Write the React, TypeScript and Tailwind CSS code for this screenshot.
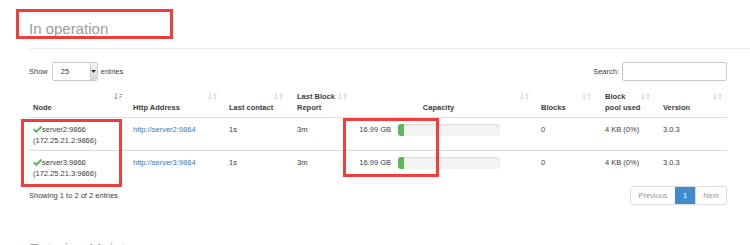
import React from "react";

function SortIcon({ active = false }: { active?: boolean }) {
  const c = active ? "#9a9a9a" : "#cfcfcf";
  return (
    <svg width="9" height="7" viewBox="0 0 9 7" fill="none" stroke={c} strokeWidth="1">
      <path d="M2 0 V6 M0.5 4.5 L2 6 L3.5 4.5" />
      {active ? (
        <path d="M5.5 1.5 H8.5 M5.5 3.5 H7.5 M5.5 5.5 H6.5" />
      ) : (
        <path d="M7 7 V1 M5.5 2.5 L7 1 L8.5 2.5" />
      )}
    </svg>
  );
}

function Check() {
  return (
    <svg width="9" height="7" viewBox="0 0 9 7" fill="none" stroke="#5cb85c" strokeWidth="2" strokeLinecap="square">
      <path d="M1.2 3.8 L3.4 5.8 L7.8 1.2" />
    </svg>
  );
}

const cols = "grid grid-cols-[98px_95px_67px_63px_181px_64px_58px_72px]";

function Th({
  children,
  pl,
  right,
  active,
  center,
}: {
  children: React.ReactNode;
  pl: string;
  right: string;
  active?: boolean;
  center?: boolean;
}) {
  return (
    <div className={`relative flex h-full items-end pb-[4px] ${pl} ${center ? "justify-center pr-[8px]" : ""}`}>
      <div className="font-bold leading-[11px]">{children}</div>
      <div className={`absolute top-[5px] ${right}`}>
        <SortIcon active={active} />
      </div>
    </div>
  );
}

function Row({ host, ip, border }: { host: string; ip: string; border?: boolean }) {
  return (
    <div className={`${cols} h-[32px] ${border ? "border-t border-[#ddd]" : ""}`}>
      <div className="pl-[4px] pt-[6px] leading-[11px]">
        <div className="flex items-center">
          <Check />
          <span>{host}:9866</span>
        </div>
        <div>({ip}:9866)</div>
      </div>
      <div className="pl-[6px] pt-[6px] leading-[11px]">
        <span className="text-[#337ab7]">http://{host}:9864</span>
      </div>
      <div className="pl-[7px] pt-[6px] leading-[11px]">1s</div>
      <div className="pl-[8px] pt-[6px] leading-[11px]">3m</div>
      <div className="flex items-start pt-[6px]">
        <div className="w-[39px] text-right leading-[11px]">16.99 GB</div>
        <div className="ml-[7px] h-[12px] w-[102px] overflow-hidden rounded-[3px] bg-[#f3f3f3] shadow-[inset_0_1px_2px_rgba(0,0,0,0.1)]">
          <div className="h-full w-[6px] bg-[#5cb85c]" />
        </div>
      </div>
      <div className="pl-[8px] pt-[6px] leading-[11px] text-[#444]">0</div>
      <div className="pl-[8px] pt-[6px] leading-[11px]">4 KB (0%)</div>
      <div className="pl-[8px] pt-[6px] leading-[11px]">3.0.3</div>
    </div>
  );
}

export default function App() {
  return (
    <div className="relative h-[245px] w-[750px] overflow-hidden bg-white font-['Liberation_Sans',Arial,sans-serif] text-[7.5px] text-[#3c3c3c]">
      <div className="pl-[29px] pt-[20px]">
        <h3 className="text-[15px] leading-[17px] text-[#9d9d9d]">In operation</h3>
      </div>
      <div className="ml-[29px] mt-[11px] h-px bg-[#eee]" />

      <div className="mt-[13px] flex items-center justify-between pl-[29px] pr-[23px]">
        <div className="flex items-center">
          <span>Show</span>
          <div className="ml-[4px] flex h-[19px] w-[46px] items-center overflow-hidden rounded-[2px] border border-[#ccc]">
            <span className="flex-1 pl-[8px]">25</span>
            <div className="flex h-full w-[7px] items-center justify-center border-l border-[#ccc] bg-gradient-to-b from-[#f4f4f4] to-[#d8d8d8]">
              <svg width="5" height="3" viewBox="0 0 5 3">
                <path d="M0 0 H5 L2.5 3 Z" fill="#333" />
              </svg>
            </div>
          </div>
          <span className="ml-[3px]">entries</span>
        </div>
        <div className="flex items-center">
          <span>Search:</span>
          <div className="ml-[3px] h-[19px] w-[105px] rounded-[2px] border border-[#ccc]" />
        </div>
      </div>

      <div className="ml-[29px] mt-[7px] w-[698px]">
        <div className={`${cols} h-[30px] border-b border-[#ddd]`}>
          <Th pl="pl-[4px]" right="right-[4px]" active>Node</Th>
          <Th pl="pl-[6px]" right="right-[5px]">Http Address</Th>
          <Th pl="pl-[7px]" right="right-[6px]">Last contact</Th>
          <Th pl="pl-[8px]" right="right-[5px]">
            Last Block
            <br />
            Report
          </Th>
          <Th pl="pl-[0px]" right="right-[4px]" center>Capacity</Th>
          <Th pl="pl-[8px]" right="right-[6px]">Blocks</Th>
          <Th pl="pl-[8px]" right="right-[5px]">
            Block
            <br />
            pool used
          </Th>
          <Th pl="pl-[8px]" right="right-[5px]">Version</Th>
        </div>
        <Row host="server2" ip="172.25.21.2" />
        <Row host="server3" ip="172.25.21.3" border />

        <div className="mt-[4px] flex items-center justify-between">
          <span>Showing 1 to 2 of 2 entries</span>
          <div className="flex h-[19px] overflow-hidden rounded-[3px] border border-[#ddd] text-[#999]">
            <div className="flex w-[44px] items-center justify-center">Previous</div>
            <div className="flex w-[20px] items-center justify-center bg-[#428bca] text-white">1</div>
            <div className="flex w-[31px] items-center justify-center border-l border-[#ddd]">Next</div>
          </div>
        </div>
      </div>

      <div className="pl-[29px] pt-[35px]">
        <h3 className="text-[15px] leading-[17px] text-[#9d9d9d]">Entering Maintenance</h3>
      </div>

      <div className="pointer-events-none absolute left-[16px] top-[9px] h-[30px] w-[157px] border-[3px] border-[#f23d3d]" />
      <div className="pointer-events-none absolute left-[21px] top-[119px] h-[68px] w-[101px] border-[3px] border-[#f23d3d]" />
      <div className="pointer-events-none absolute left-[343px] top-[118px] h-[59px] w-[96px] border-[3px] border-[#f23d3d]" />
    </div>
  );
}
